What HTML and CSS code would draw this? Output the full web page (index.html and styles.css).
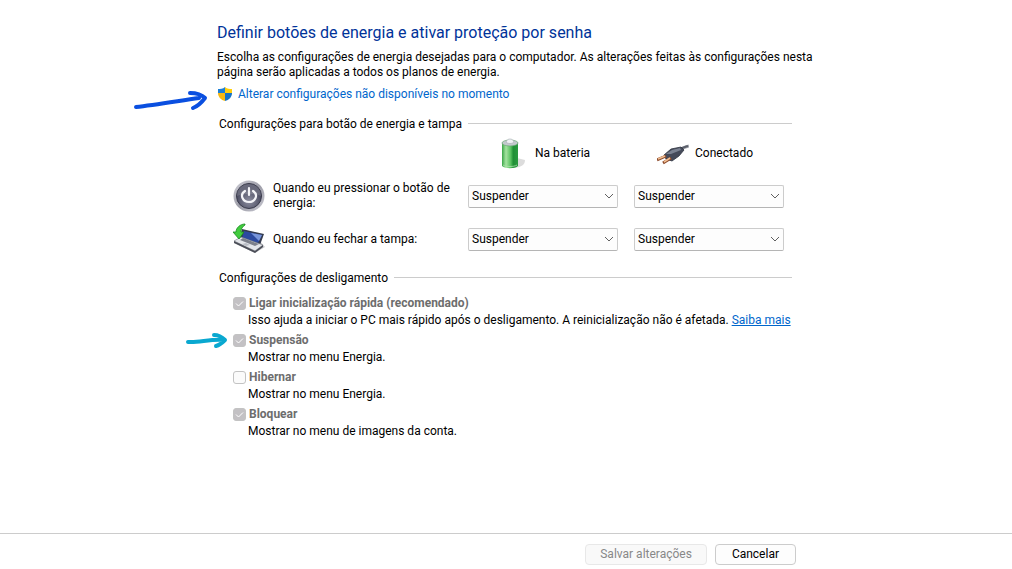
FILE: index.html
```
<!DOCTYPE html>
<html lang="pt-BR">
<head>
    <meta charset="UTF-8">
    <meta name="viewport" content="width=device-width, initial-scale=1.0">
    <title>Configurações do Sistema</title>
    <link rel="stylesheet" href="styles.css">
</head>
<body>
    <main class="content">
        <h1>Definir botões de energia e ativar proteção por senha</h1>
        <p class="intro">Escolha as configurações de energia desejadas para o computador. As alterações feitas às configurações nesta página serão aplicadas a todos os planos de energia.</p>

        <div class="admin">
            <svg class="arrow arrow-blue" viewBox="0 0 76 24" aria-hidden="true">
                <path d="M4 19 C22 17 46 13 67 10 M58 5 C64 5 69 6 73 10 C70 14 66 18 61 20"/>
            </svg>
            <svg class="shield" viewBox="0 0 16 16" aria-hidden="true">
                <path fill="#1c7fd6" d="M8 1 C6 3 3 3 1 3 V7 H8Z"/>
                <path fill="#ffcf0f" d="M8 1 C10 3 13 3 15 3 V7 H8Z"/>
                <path fill="#f7b912" d="M1 7 C1 11 4 14 8 15 V7Z"/>
                <path fill="#1673c8" d="M15 7 C15 11 12 14 8 15 V7Z"/>
            </svg>
            <a href="#">Alterar configurações não disponíveis no momento</a>
        </div>

        <section class="group">
            <h2>Configurações para botão de energia e tampa</h2>
            <div class="power-grid">
                <div class="source source-battery">
                    <svg class="icon" viewBox="0 0 32 32" aria-hidden="true">
                        <defs>
                            <linearGradient id="green">
                                <stop offset="0" stop-color="#3aa648"/>
                                <stop offset="0.25" stop-color="#a5e3a0"/>
                                <stop offset="0.55" stop-color="#56c05e"/>
                                <stop offset="0.7" stop-color="#1f8f35"/>
                                <stop offset="1" stop-color="#2a9a40"/>
                            </linearGradient>
                        </defs>
                        <path fill="#dcdcdc" d="M22 21 L30 23 C30 28 26 30 20 31Z"/>
                        <path fill="url(#green)" d="M7 6 C10 4 20 4 23 6 V29 C20 32 10 32 7 29Z"/>
                        <ellipse cx="15" cy="6" rx="8" ry="3" fill="#c3c9cd" stroke="#6ca876" stroke-width="0.7"/>
                        <path fill="#f0f2f4" stroke="#a3a8b0" stroke-width="0.6" d="M11 5 C12 3 13 2 15 2 C17 2 18 3 19 5 C17 7 13 7 11 5Z"/>
                        <path fill="none" stroke="#a9dfa9" stroke-width="0.8" d="M8 28 C11 30 19 30 22 28"/>
                    </svg>
                    <span>Na bateria</span>
                </div>
                <div class="source source-plug">
                    <svg class="icon" viewBox="0 0 32 32" aria-hidden="true">
                        <path fill="none" stroke="#a5a8b0" stroke-width="3" d="M23 13 C26 10 28 10 32 9"/>
                        <path fill="none" stroke="#5b5f6a" stroke-width="2" d="M23 13 C26 10 28 10 31 9"/>
                        <path fill="#454a5a" stroke="#2f3340" stroke-width="0.8" d="M7 18 L14 12 L24 10 L27 13 L22 19 L15 24 L9 22Z"/>
                        <path fill="#7b8292" d="M9 17 L15 13 L23 11 L24 13 L14 17Z"/>
                        <path fill="none" stroke="#8e4d2e" stroke-width="3" d="M0 23 L9 19 M6 26 L14 21"/>
                        <path fill="none" stroke="#f0bd91" stroke-width="1.6" d="M1 22 L8 19 M7 25 L13 21"/>
                    </svg>
                    <span>Conectado</span>
                </div>

                <div class="row-title">
                    <svg class="icon" viewBox="0 0 32 32" aria-hidden="true">
                        <defs>
                            <linearGradient id="ring" x2="1" y2="1">
                                <stop offset="0" stop-color="#d0d0d8"/>
                                <stop offset="0.5" stop-color="#9d9da8"/>
                                <stop offset="1" stop-color="#c9c9d2"/>
                            </linearGradient>
                            <radialGradient id="face" cy="0.7">
                                <stop offset="0" stop-color="#8d8ea0"/>
                                <stop offset="1" stop-color="#4c4d62"/>
                            </radialGradient>
                        </defs>
                        <circle cx="16" cy="16" r="15.5" fill="url(#ring)"/>
                        <circle cx="16" cy="16" r="12.5" fill="url(#face)" stroke="#393a4b"/>
                        <path fill="#ffffff" opacity="0.16" d="M4 16 C4 0 28 0 28 16 C21 13 11 13 4 16Z"/>
                        <path fill="none" stroke="#f4f4f8" stroke-width="2.2" stroke-linecap="round" d="M12 11 C6 15 10 22 16 22 C22 22 26 15 20 11 M16 8 V15"/>
                    </svg>
                    <span id="button-label">Quando eu pressionar o botão de energia:</span>
                </div>
                <select aria-labelledby="button-label">
                    <option>Suspender</option>
                </select>
                <select aria-labelledby="button-label">
                    <option>Suspender</option>
                </select>

                <div class="row-title">
                    <svg class="icon" viewBox="0 0 32 32" aria-hidden="true">
                        <path fill="#c9c9cc" d="M1 20 L22 30 L32 24 L26 17Z"/>
                        <path fill="#343b4e" d="M9 6 L31 11 L27 22 L7 16Z"/>
                        <path fill="#2c4aa0" d="M11 8 L29 12 L25 20 L9 15Z"/>
                        <path fill="#7895da" d="M18 10 L29 12 L26 18Z"/>
                        <path fill="#e4e6ea" stroke="#777b83" stroke-width="0.6" d="M1 18 L8 14 L30 22 L22 28Z"/>
                        <path fill="#7c808b" d="M7 17 L10 15 L26 21 L22 23Z"/>
                        <path fill="#4b4e58" d="M1 18 L22 28 L30 22 V24 L22 30 L1 20Z"/>
                        <path fill="#b8bcc4" d="M9 21 L13 20 L17 22 L13 23Z"/>
                        <path fill="#42cc3e" stroke="#168a20" stroke-width="0.8" d="M12 1 C7 1 3 5 3 9 L0 9 L6 16 L11 9 L8 9 C8 6 9 4 12 2Z"/>
                    </svg>
                    <span id="lid-label">Quando eu fechar a tampa:</span>
                </div>
                <select aria-labelledby="lid-label">
                    <option>Suspender</option>
                </select>
                <select aria-labelledby="lid-label">
                    <option>Suspender</option>
                </select>
            </div>
        </section>

        <section class="group">
            <h2>Configurações de desligamento</h2>
            <div class="options">
                <div class="option">
                    <label><input type="checkbox" checked disabled>Ligar inicialização rápida (recomendado)</label>
                    <p>Isso ajuda a iniciar o PC mais rápido após o desligamento. A reinicialização não é afetada. <a href="#">Saiba mais</a></p>
                </div>
                <div class="option">
                    <svg class="arrow arrow-cyan" viewBox="0 0 44 20" aria-hidden="true">
                        <path d="M4 11 C14 12 26 8 39 9 M30 4 C34 4 38 6 41 9 C38 12 36 14 32 15"/>
                    </svg>
                    <label><input type="checkbox" checked disabled>Suspensão</label>
                    <p>Mostrar no menu Energia.</p>
                </div>
                <div class="option">
                    <label><input type="checkbox" disabled>Hibernar</label>
                    <p>Mostrar no menu Energia.</p>
                </div>
                <div class="option">
                    <label><input type="checkbox" checked disabled>Bloquear</label>
                    <p>Mostrar no menu de imagens da conta.</p>
                </div>
            </div>
        </section>
    </main>

    <footer class="footer">
        <div class="actions">
            <button type="button" class="save" disabled>Salvar alterações</button>
            <button type="button" class="cancel">Cancelar</button>
        </div>
    </footer>
</body>
</html>
```

FILE: styles.css
```
* {
    box-sizing: border-box;
}
body {
    display: flex;
    flex-direction: column;
    min-height: 100vh;
    margin: 0;
    background: #ffffff;
    color: #000000;
    font-family: "Segoe UI", Roboto, sans-serif;
    font-size: 12px;
    line-height: 16px;
}
h1, h2, p {
    margin: 0;
    font-weight: 400;
}
a {
    color: #0066cc;
}
.content {
    flex: 1;
    width: 100%;
    max-width: 580px;
    margin: 0 auto;
    padding: 22px 0 20px 1px;
}
h1 {
    color: #003399;
    font-size: 16px;
    line-height: 22px;
}
.intro {
    margin: 6px -20px 0 0;
    line-height: 15px;
}
.admin {
    position: relative;
    display: flex;
    align-items: center;
    gap: 5px;
    margin-top: 6px;
}
.admin a {
    text-decoration: none;
}
.shield {
    width: 16px;
    height: 16px;
}

/* hand-drawn pointers */
.arrow {
    position: absolute;
    fill: none;
    stroke-width: 4;
    stroke-linecap: round;
    stroke-linejoin: round;
}
.arrow-blue {
    left: -85px;
    top: 2px;
    width: 76px;
    height: 24px;
    stroke: #0a4fe0;
}
.arrow-cyan {
    left: -49px;
    top: 0;
    width: 44px;
    height: 20px;
    stroke: #0aa8d0;
}

.group {
    margin-top: 14px;
    padding: 0 4px 0 2px;
}
.group h2 {
    display: flex;
    align-items: center;
    gap: 6px;
    font-size: 12px;
}
.group h2::after {
    content: "";
    flex: 1;
    height: 1px;
    margin-bottom: 2px;
    background: #cccccc;
}
.power-grid {
    display: grid;
    grid-template-columns: 1fr 150px 150px;
    gap: 11px 16px;
    align-items: center;
    margin: 5px 0 15px;
    padding: 0 8px 0 14px;
}
.icon {
    flex: none;
    width: 32px;
    height: 32px;
}
.source {
    display: flex;
    align-items: center;
}
.source-battery {
    grid-column: 2;
    gap: 8px;
    padding-left: 27px;
}
.source-plug {
    grid-column: 3;
    gap: 6px;
    padding-left: 23px;
}
.row-title {
    display: flex;
    align-items: center;
    gap: 8px;
    line-height: 15px;
}
select {
    appearance: none;
    width: 100%;
    height: 23px;
    padding: 0 20px 0 3px;
    border: 1px solid #cccccc;
    border-bottom-color: #b5b5b5;
    border-radius: 2px;
    background: #fdfdfd url("data:image/svg+xml,%3Csvg xmlns='http://www.w3.org/2000/svg' width='10' height='6'%3E%3Cpath d='M1 1L5 5L9 1' fill='none' stroke='%23606060'/%3E%3C/svg%3E") no-repeat right 3px center;
    color: #000000;
    font: inherit;
}

.options {
    display: flex;
    flex-direction: column;
    gap: 3px;
    margin-top: 8px;
    padding-left: 14px;
}
.option {
    position: relative;
}
.option label {
    display: flex;
    align-items: center;
    gap: 3px;
    color: #6d6d6d;
    font-weight: 700;
    line-height: 18px;
}
.option p {
    padding-left: 15px;
}
input[type="checkbox"] {
    appearance: none;
    width: 13px;
    height: 13px;
    margin: 0;
    border: 1px solid #c3c3c3;
    border-radius: 3px;
    background: #fbfbfb;
}
input[type="checkbox"]:checked {
    background: #c3c1c4 url("data:image/svg+xml,%3Csvg xmlns='http://www.w3.org/2000/svg' width='9' height='7'%3E%3Cpath d='M1 3.5L3.5 6L8 1.5' fill='none' stroke='white'/%3E%3C/svg%3E") no-repeat center;
}

.footer {
    padding: 10px 0 4px;
    border-top: 1px solid #cccccc;
}
.actions {
    display: flex;
    justify-content: flex-end;
    gap: 8px;
    max-width: 580px;
    margin: 0 auto;
}
button {
    height: 21px;
    padding: 0 16px;
    border: 1px solid #cccccc;
    border-radius: 4px;
    background: #fdfdfd;
    color: #000000;
    font: inherit;
    line-height: 19px;
}
.save {
    padding: 0 14px;
}
button:disabled {
    border-color: #e8e8e8;
    background: #f9f9f9;
    color: #888888;
}
```
